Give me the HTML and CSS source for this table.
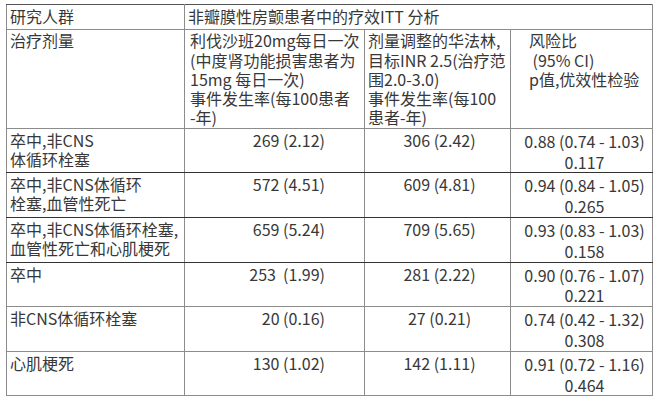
FILE: index.html
```html
<!DOCTYPE html>
<html lang="zh-CN">
<head>
<meta charset="utf-8">
<title>疗效ITT 分析</title>
<link rel="stylesheet" href="styles.css">
</head>
<body>
<div class="sheet">
<table class="efficacy">
  <colgroup>
    <col class="c-name">
    <col class="c-riva">
    <col class="c-warf">
    <col class="c-hr">
  </colgroup>
  <tr class="r-title">
    <td>研究人群</td>
    <td colspan="3">非瓣膜性房颤患者中的疗效ITT 分析</td>
  </tr>
  <tr class="r-head">
    <td>治疗剂量</td>
    <td class="h-riva">利伐沙班20mg每日一次<br>(中度肾功能损害患者为<br>15mg 每日一次)<br>事件发生率(每100患者<br>-年)</td>
    <td class="h-warf">剂量调整的华法林,<br>目标INR 2.5(治疗范<br>围2.0-3.0)<br>事件发生率(每100<br>患者-年)</td>
    <td class="h-hr">风险比<br>&nbsp;(95% CI)<br>p值,优效性检验</td>
  </tr>
  <tr class="r-data r-dark">
    <td class="d-name">卒中,非CNS<br>体循环栓塞</td>
    <td class="d-riva">269 (2.12)</td>
    <td class="d-warf">306 (2.42)</td>
    <td class="d-hr">0.88 (0.74 - 1.03)<br>0.117</td>
  </tr>
  <tr class="r-data r-dark">
    <td class="d-name">卒中,非CNS体循环<br>栓塞,血管性死亡</td>
    <td class="d-riva">572 (4.51)</td>
    <td class="d-warf">609 (4.81)</td>
    <td class="d-hr">0.94 (0.84 - 1.05)<br>0.265</td>
  </tr>
  <tr class="r-data r-dark">
    <td class="d-name">卒中,非CNS体循环栓塞,<br>血管性死亡和心肌梗死</td>
    <td class="d-riva">659 (5.24)</td>
    <td class="d-warf">709 (5.65)</td>
    <td class="d-hr">0.93 (0.83 - 1.03)<br>0.158</td>
  </tr>
  <tr class="r-data">
    <td class="d-name">卒中</td>
    <td class="d-riva">253&nbsp; (1.99)</td>
    <td class="d-warf">281 (2.22)</td>
    <td class="d-hr">0.90 (0.76 - 1.07)<br>0.221</td>
  </tr>
  <tr class="r-data">
    <td class="d-name">非CNS体循环栓塞</td>
    <td class="d-riva">20 (0.16)</td>
    <td class="d-warf">27 (0.21)</td>
    <td class="d-hr">0.74 (0.42 - 1.32)<br>0.308</td>
  </tr>
  <tr class="r-data">
    <td class="d-name">心肌梗死</td>
    <td class="d-riva">130 (1.02)</td>
    <td class="d-warf">142 (1.11)</td>
    <td class="d-hr">0.91 (0.72 - 1.16)<br>0.464</td>
  </tr>
</table>
</div>
</body>
</html>
```

FILE: styles.css
```css
html, body {
  margin: 0;
  padding: 0;
  background: #ffffff;
}

body {
  font-family: "Noto Sans CJK SC", "Noto Sans", sans-serif;
  font-size: 16px;
  color: #383838;
}

.sheet {
  padding: 4px 0 0 6px;
}

.efficacy {
  border-collapse: collapse;
  table-layout: fixed;
  width: 647px;
}

.c-name { width: 178px; }
.c-riva { width: 180px; }
.c-warf { width: 146px; }
.c-hr   { width: 142px; }

.efficacy td {
  border: 1px solid #8c8c8c;
  vertical-align: top;
  padding: 2px 3px 3px 3px;
  line-height: 19.3px;
  white-space: nowrap;
}

.efficacy .r-title td {
  border-top-color: #555555;
}

.efficacy .r-head td {
  padding-top: 1px;
  padding-bottom: 0;
}

.efficacy .r-head .h-riva {
  padding-left: 5px;
}

.efficacy .r-head .h-hr {
  padding-left: 18px;
}

.efficacy .r-data td {
  padding: 2px 3px 0 3px;
  line-height: 19px;
}

.efficacy .r-dark td {
  border-bottom-color: #333333;
}

.efficacy .r-data .d-riva {
  text-align: right;
  padding-right: 39px;
}

.efficacy .r-data .d-warf {
  text-align: center;
  padding-left: 4px;
  padding-right: 0;
}

.efficacy .r-data .d-hr {
  text-align: center;
  line-height: 20.8px;
  padding-left: 6px;
  padding-right: 0;
}
```
